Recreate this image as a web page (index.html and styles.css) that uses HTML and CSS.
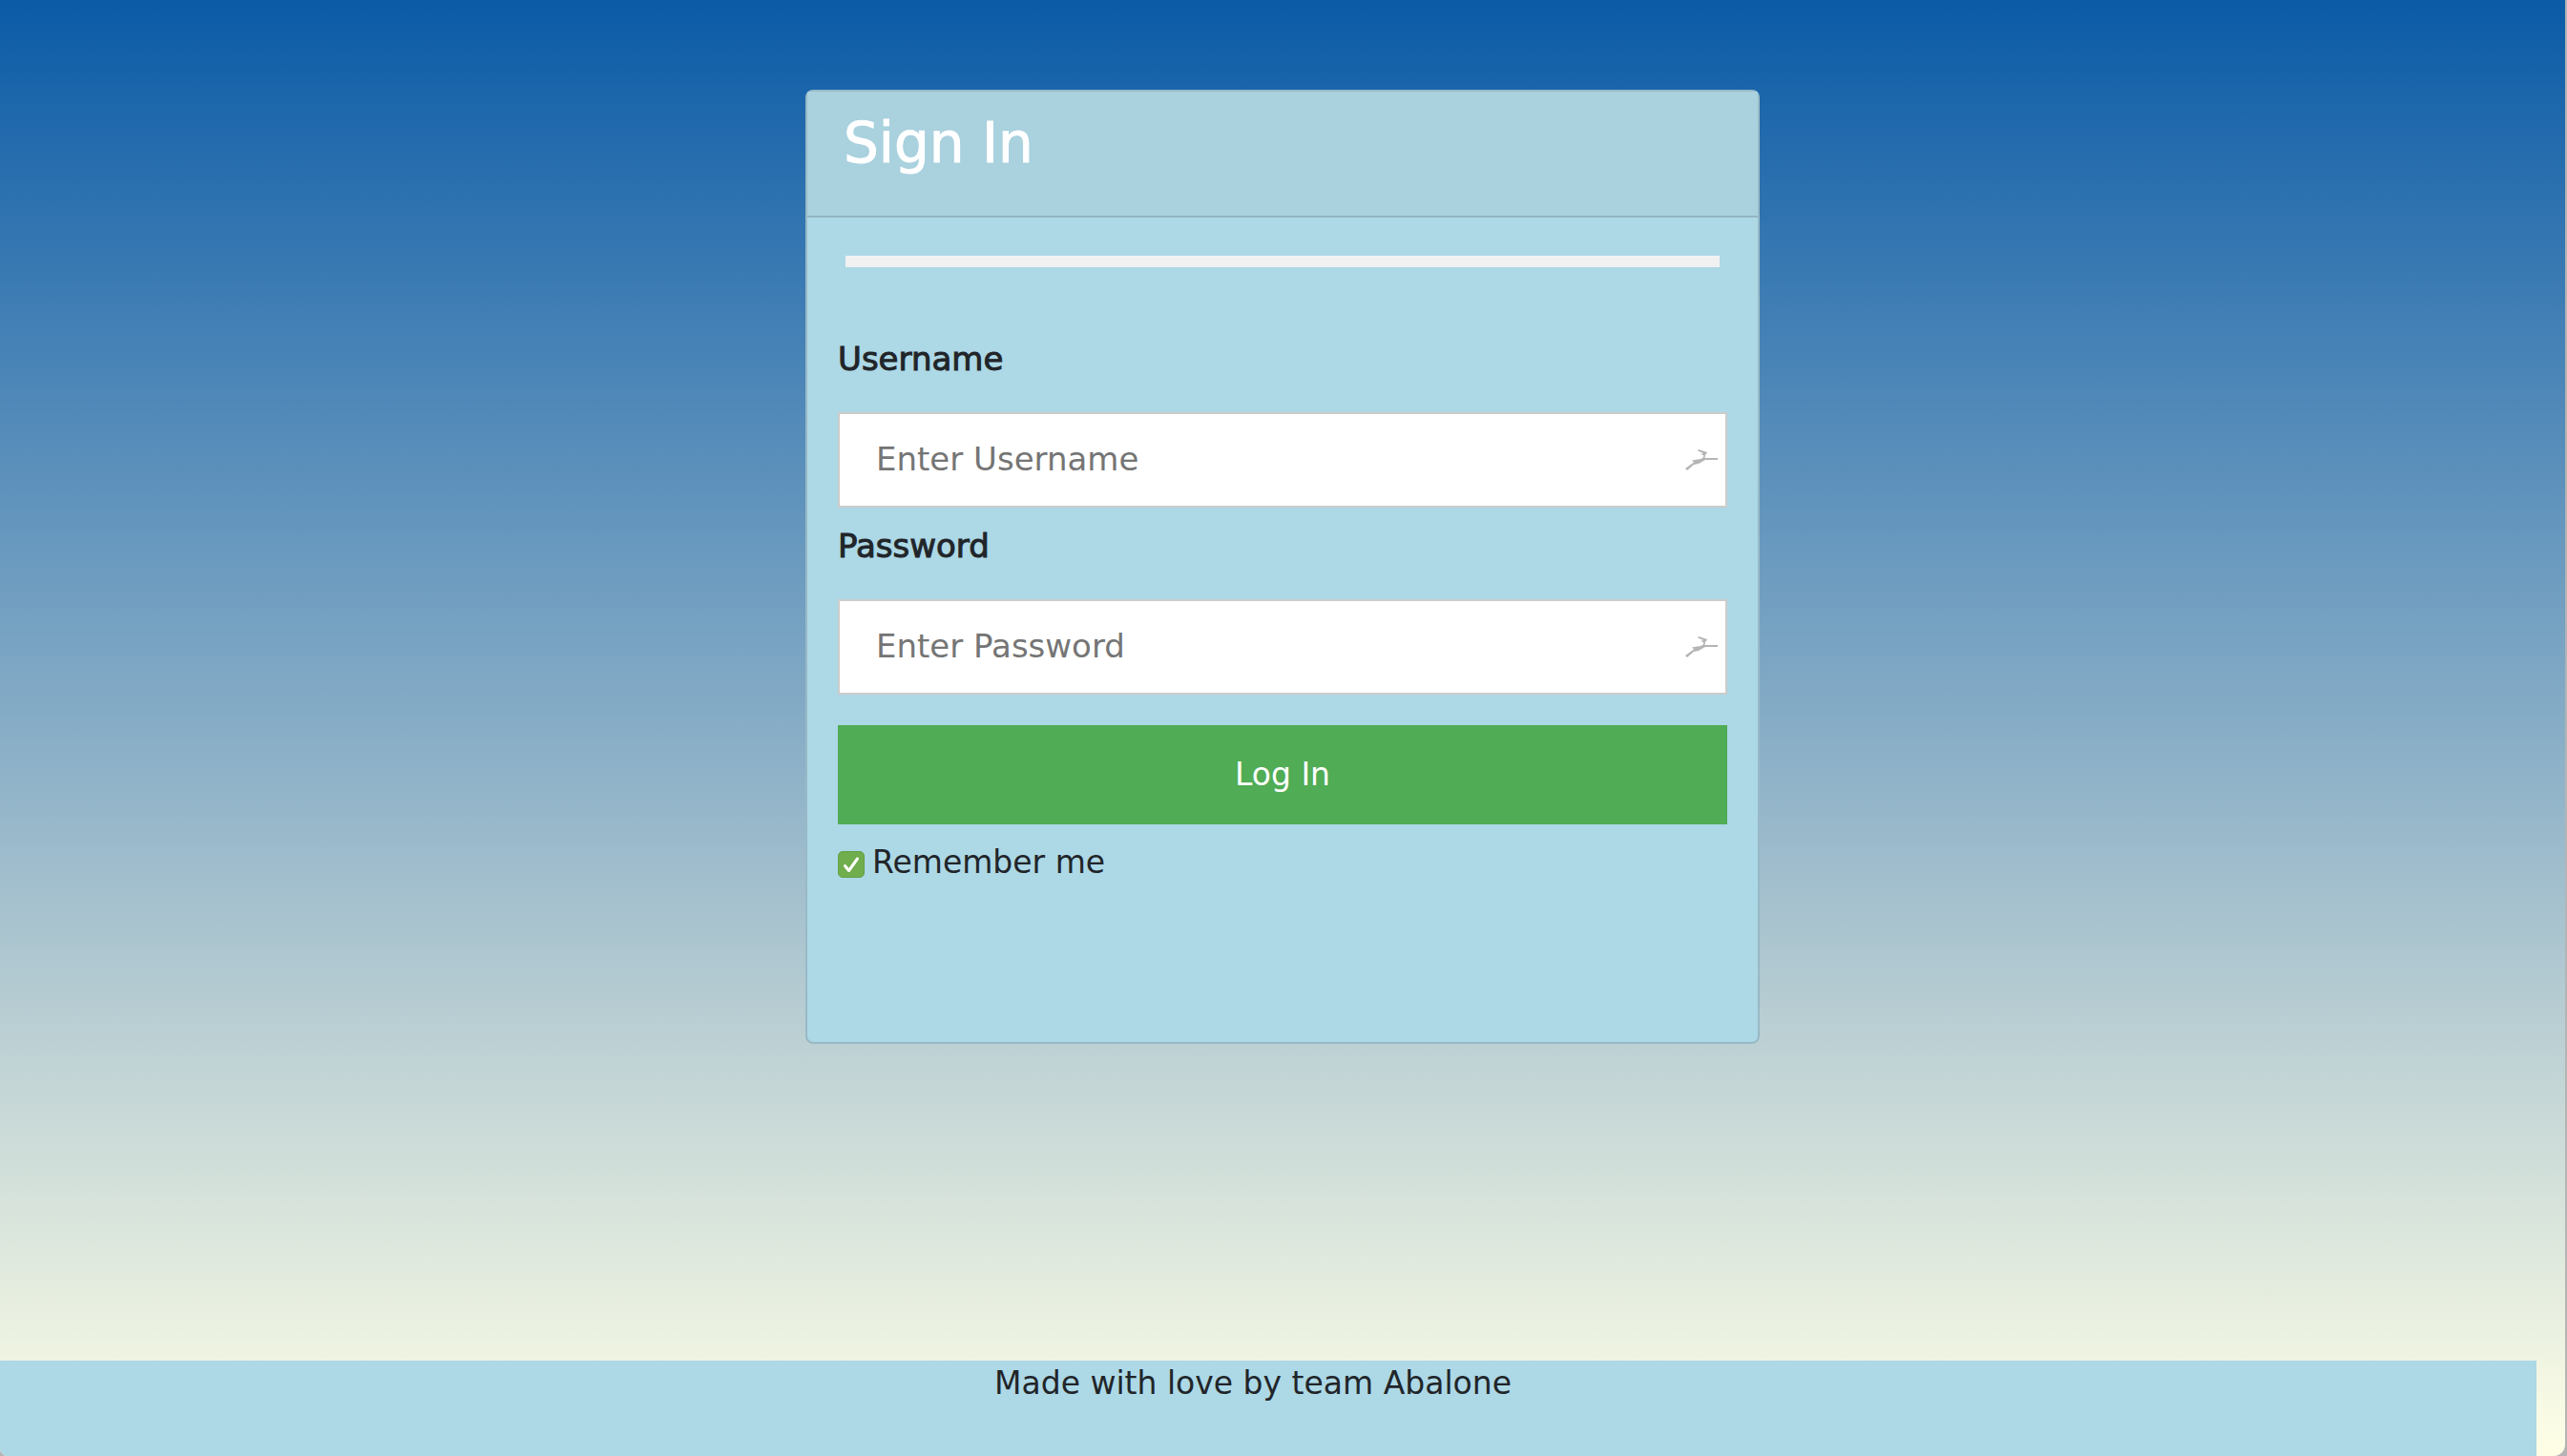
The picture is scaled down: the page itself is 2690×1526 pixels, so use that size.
FILE: index.html
```html
<!DOCTYPE html>
<html lang="en">
<head>
<meta charset="utf-8">
<title>Sign In</title>
<link rel="stylesheet" href="styles.css">
</head>
<body>
<div class="page">
  <main class="content">
    <section class="card">
      <header class="card-header"><h1 class="card-title">Sign In</h1></header>
      <form class="form">
        <div class="divider"></div>
        <label class="label" for="username">Username</label>
        <div class="field">
          <input class="input" id="username" type="text" placeholder="Enter Username">
          <svg class="field-icon" viewBox="0 0 34 22" aria-hidden="true"><path d="M0 20 9 13.500 7 11.500 16 10 19 8.500 19 6 16 5 19 4 13 1.500 14 0 23 3 22 5 21 5.500 20.500 9 34 9v2H21L14 15 9 16 2 22Z"/></svg>
        </div>
        <label class="label" for="password">Password</label>
        <div class="field">
          <input class="input" id="password" type="password" placeholder="Enter Password">
          <svg class="field-icon" viewBox="0 0 34 22" aria-hidden="true"><path d="M0 20 9 13.500 7 11.500 16 10 19 8.500 19 6 16 5 19 4 13 1.500 14 0 23 3 22 5 21 5.500 20.500 9 34 9v2H21L14 15 9 16 2 22Z"/></svg>
        </div>
        <button class="submit" type="button">Log In</button>
        <label class="remember">
          <span class="check">
            <input class="check-input" type="checkbox" checked>
            <svg class="check-mark" viewBox="0 0 28 28" aria-hidden="true"><path d="M7.500 15.500 11.500 20.500 20.500 8"/></svg>
          </span>
          Remember me
        </label>
      </form>
    </section>
  </main>
  <footer class="footer">Made with love by team Abalone</footer>
</div>
</body>
</html>
```

FILE: styles.css
```css
* { box-sizing: border-box; }

html { background: #b4b4b4; }

body {
  margin: 0;
  color: #212529;
  font: 33px/48px "DejaVu Sans", sans-serif;
}

.page {
  display: flex;
  flex-direction: column;
  min-height: 100vh;
  margin-right: 2px;
  border-radius: 0 0 12px 8px;
  overflow: hidden;
  background: linear-gradient(#0b5ba7, #b9ced3 70%, #ffffe6);
}

.content { flex: 1; padding: 94px 32px; }

.card {
  max-width: 1000px;
  min-height: 1000px;
  margin: 0 auto;
  border: 2px solid #98b9c6;
  border-radius: 8px;
  background: #add8e6;
}

.card-header {
  height: 132px;
  padding: 22px 38px;
  border-bottom: 2px solid #94b5c1;
  background: #a9d1de;
}

.card-title {
  margin: 0;
  color: #fff;
  font-size: 58px;
  font-weight: 400;
  line-height: 64px;
  -webkit-text-stroke: 1px currentColor;
}

.form { padding: 40px 32px; }

.divider {
  height: 12px;
  margin: 0 8px 72px;
  background: #f1f1f1;
}

.label {
  display: block;
  height: 48px;
  font-size: 34px;
  -webkit-text-stroke: 1px currentColor;
}

.field { position: relative; margin: 32px 0 16px; }

.input {
  display: block;
  width: 100%;
  height: 100px;
  padding: 0 38px 2px;
  border: 2px solid #ccc;
  border-radius: 0;
  background: #fff;
  color: inherit;
  font: inherit;
  font-size: 34px;
}

.input::placeholder { color: #757575; opacity: 1; }

.field-icon {
  position: absolute;
  top: 39px;
  right: 10px;
  width: 34px;
  height: 22px;
  fill: #b5b5b5;
}

.submit {
  display: block;
  width: 100%;
  height: 104px;
  margin: 32px 0 16px;
  border: 0;
  background: #50ac55;
  color: #fff;
  font: inherit;
}

.remember { display: flex; align-items: center; gap: 8px; }

.check { position: relative; width: 28px; height: 28px; margin-top: 4px; }

.check-input {
  display: block;
  width: 28px;
  height: 28px;
  margin: 0;
  appearance: none;
  border: 1px solid #67a046;
  border-radius: 5px;
  background: #70ad4d;
}

.check-mark {
  position: absolute;
  inset: 0;
  fill: none;
  stroke: #fff;
  stroke-width: 3;
  stroke-linecap: round;
  stroke-linejoin: round;
}

.footer {
  height: 100px;
  margin-right: 30px;
  padding-right: 32px;
  background: #add8e6;
  text-align: center;
}
```
